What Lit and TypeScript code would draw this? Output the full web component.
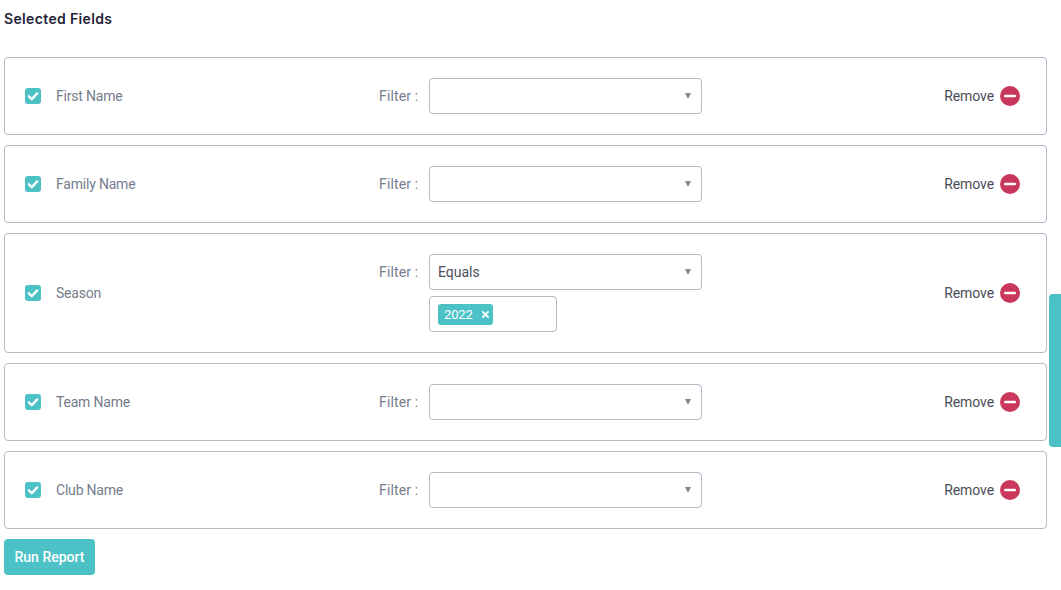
import { LitElement, html, css, svg } from "lit";
import { customElement } from "lit/decorators.js";

interface Field {
  name: string;
  op?: string;
  tag?: string;
}

const FIELDS: Field[] = [
  { name: "First Name" },
  { name: "Family Name" },
  { name: "Season", op: "Equals", tag: "2022" },
  { name: "Team Name" },
  { name: "Club Name" },
];

@customElement("app-root")
export class AppRoot extends LitElement {
  static styles = css`
    :host {
      display: block;
      position: relative;
      width: 1061px;
      height: 590px;
      box-sizing: border-box;
      padding: 0 14px 0 4px;
      overflow: hidden;
      background: #fff;
      font-family: Roboto, "Liberation Sans", sans-serif;
      font-size: 14px;
    }
    h2 {
      margin: 0;
      padding-top: 10px;
      height: 57px;
      box-sizing: border-box;
      font-family: Inter, Roboto, sans-serif;
      font-size: 14px;
      line-height: 17px;
      font-weight: 600;
      letter-spacing: 0.35px;
      color: #1f2337;
    }
    .rows {
      display: flex;
      flex-direction: column;
      gap: 10px;
    }
    .row {
      display: grid;
      grid-template-columns: 354px auto 1fr;
      align-items: center;
      box-sizing: border-box;
      min-height: 78px;
      padding: 20px 26px 20px 20px;
      border: 1px solid #afbcc6;
      border-radius: 4px;
    }
    .field {
      display: flex;
      align-items: center;
      gap: 15px;
      color: #757c8d;
      letter-spacing: -0.2px;
    }
    .check {
      width: 16px;
      height: 16px;
      flex: none;
      display: block;
    }
    .filter {
      display: flex;
      align-items: flex-start;
      gap: 11px;
    }
    .filter-label {
      width: 39px;
      white-space: nowrap;
      line-height: 36px;
      color: #757c8d;
      letter-spacing: 0.15px;
    }
    .controls {
      display: flex;
      flex-direction: column;
      gap: 6px;
    }
    .select {
      display: flex;
      align-items: center;
      justify-content: space-between;
      box-sizing: border-box;
      width: 273px;
      height: 36px;
      padding: 0 10px 0 8px;
      border: 1px solid #afbcc6;
      border-radius: 4px;
      color: #4a4e5c;
    }
    .caret {
      width: 0;
      height: 0;
      border-left: 3.5px solid transparent;
      border-right: 3.5px solid transparent;
      border-top: 6px solid #888;
    }
    .multi {
      display: flex;
      align-items: center;
      box-sizing: border-box;
      width: 128px;
      height: 36px;
      padding: 0 8px;
      border: 1px solid #afbcc6;
      border-radius: 4px;
    }
    .tag {
      display: flex;
      align-items: center;
      gap: 9px;
      box-sizing: border-box;
      width: 55px;
      height: 21px;
      padding: 0 5px 0 6px;
      background: #4cc2c6;
      border-radius: 3px;
      color: #fff;
      font-size: 13px;
      letter-spacing: -0.15px;
    }
    .tag svg {
      flex: none;
      width: 7px;
      height: 7px;
      display: block;
    }
    .remove {
      justify-self: end;
      display: flex;
      align-items: center;
      gap: 6px;
      color: #4a4d57;
      letter-spacing: -0.1px;
    }
    .remove svg {
      width: 20px;
      height: 20px;
      display: block;
    }
    .run {
      display: block;
      margin-top: 10px;
      width: 91px;
      height: 36px;
      padding: 0;
      border: 0;
      border-radius: 4px;
      background: #4cc2c6;
      color: #fff;
      font-family: Roboto, sans-serif;
      font-size: 14px;
      font-weight: 500;
    }
    .thumb {
      position: absolute;
      left: 1049px;
      top: 294px;
      width: 12px;
      height: 153px;
      background: #4cc2c6;
      border-radius: 4px 0 0 4px;
    }
  `;

  private checkIcon() {
    return svg`<svg class="check" viewBox="0 0 16 16">
      <rect width="16" height="16" rx="3" fill="#4cc2c6"></rect>
      <path d="M3.8 8.3 6.8 11.2 12.2 5.4" fill="none" stroke="#fff" stroke-width="2.4" stroke-linecap="round" stroke-linejoin="round"></path>
    </svg>`;
  }

  private removeIcon() {
    return svg`<svg viewBox="0 0 20 20">
      <circle cx="10" cy="10" r="10" fill="#c9375c"></circle>
      <rect x="4" y="8.7" width="12" height="2.6" rx="1.2" fill="#fff"></rect>
    </svg>`;
  }

  private renderRow(f: Field) {
    return html`<div class="row">
      <div class="field">${this.checkIcon()}<span>${f.name}</span></div>
      <div class="filter">
        <span class="filter-label">Filter :</span>
        <div class="controls">
          <div class="select"><span>${f.op ?? ""}</span><span class="caret"></span></div>
          ${f.tag
            ? html`<div class="multi">
                <span class="tag">${f.tag}
                  <svg viewBox="0 0 7 7"><path d="M1 1 6 6M6 1 1 6" stroke="#fff" stroke-width="1.8" stroke-linecap="round"></path></svg>
                </span>
              </div>`
            : ""}
        </div>
      </div>
      <div class="remove"><span>Remove</span>${this.removeIcon()}</div>
    </div>`;
  }

  render() {
    return html`
      <h2>Selected Fields</h2>
      <div class="rows">${FIELDS.map((f) => this.renderRow(f))}</div>
      <button class="run">Run Report</button>
      <div class="thumb"></div>
    `;
  }
}
